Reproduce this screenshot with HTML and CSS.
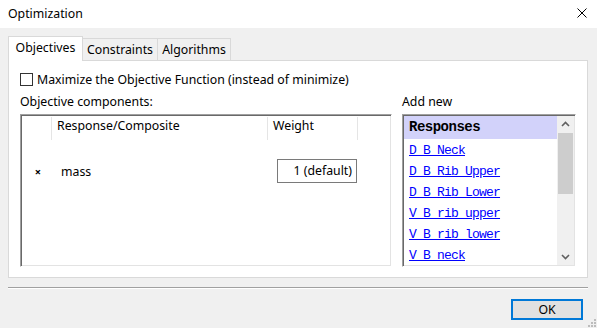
FILE: index.html
```html
<!doctype html>
<html lang="en">
<head>
    <meta charset="UTF-8">
    <title>Optimization</title>
    <link rel="stylesheet" href="styles.css">
</head>
<body>
<div class="window">
    <div class="titlebar">
        <span class="title">Optimization</span>
        <svg class="close" width="10" height="10" viewBox="0 0 10 10">
            <path d="M0.5 0.5L9.5 9.5M9.5 0.5L0.5 9.5" stroke="#000" stroke-width="1" fill="none"/>
        </svg>
    </div>
    <div class="content">
        <div class="tabs">
            <div class="tab on">Objectives</div>
            <div class="tab tab-c">Constraints</div>
            <div class="tab tab-a">Algorithms</div>
        </div>
        <div class="panel">
            <label class="check"><span class="box"></span>Maximize the Objective Function (instead of minimize)</label>
            <div class="cols">
                <div class="left">
                    <div class="caption">Objective components:</div>
                    <div class="sunken grid">
                        <div class="head">
                            <div class="cell c1"></div>
                            <div class="cell c2">Response/Composite</div>
                            <div class="cell c3">Weight</div>
                            <div class="cell c4"></div>
                        </div>
                        <div class="row">
                            <div class="c1 del">&times;</div>
                            <div class="c2 name">mass</div>
                            <div class="c3"><div class="weight">1 (default)</div></div>
                        </div>
                    </div>
                </div>
                <div class="right">
                    <div class="caption">Add new</div>
                    <div class="sunken addbox">
                        <div class="items">
                            <div class="group">Responses</div>
                            <a class="item" href="#">D B Neck</a>
                            <a class="item" href="#">D B Rib Upper</a>
                            <a class="item" href="#">D B Rib Lower</a>
                            <a class="item" href="#">V B rib upper</a>
                            <a class="item" href="#">V B rib lower</a>
                            <a class="item" href="#">V B neck</a>
                        </div>
                        <div class="scroll">
                            <svg class="arrow" width="17" height="17" viewBox="0 0 17 17">
                                <path d="M5 10L8.5 6.5L12 10" stroke="#606060" stroke-width="1.6" fill="none"/>
                            </svg>
                            <div class="track"><div class="thumb"></div></div>
                            <svg class="arrow" width="17" height="17" viewBox="0 0 17 17">
                                <path d="M5 7L8.5 10.5L12 7" stroke="#606060" stroke-width="1.6" fill="none"/>
                            </svg>
                        </div>
                    </div>
                </div>
            </div>
        </div>
        <div class="sep"></div>
        <div class="footer">
            <button class="ok">OK</button>
        </div>
    </div>
    <svg class="grip" width="8" height="8" viewBox="0 0 8 8">
        <rect x="6" y="0" width="2" height="2" fill="#bcbcbc"/>
        <rect x="3" y="3" width="2" height="2" fill="#bcbcbc"/>
        <rect x="6" y="3" width="2" height="2" fill="#bcbcbc"/>
        <rect x="0" y="6" width="2" height="2" fill="#bcbcbc"/>
        <rect x="3" y="6" width="2" height="2" fill="#bcbcbc"/>
        <rect x="6" y="6" width="2" height="2" fill="#bcbcbc"/>
    </svg>
</div>
</body>
</html>
```

FILE: styles.css
```css
* {
    margin: 0;
    padding: 0;
    box-sizing: border-box;
}

body {
    width: 597px;
    height: 328px;
    overflow: hidden;
    font-family: "Noto Sans", "Liberation Sans", sans-serif;
    font-size: 12.3px;
    color: #000;
    background: #f0f0f0;
}

.window {
    position: relative;
    height: 328px;
}

.titlebar {
    height: 28px;
    background: #fff;
    display: flex;
    align-items: center;
    justify-content: space-between;
    padding: 0 10px 2px 8px;
}

.content {
    padding: 8px 9px 0 8px;
}

/* tabs */
.tabs {
    display: flex;
    align-items: flex-end;
    height: 24px;
}

.tab {
    height: 22px;
    line-height: 21px;
    border: 1px solid #d9d9d9;
    border-bottom: none;
    background: #f0f0f0;
    text-align: center;
    margin-left: -1px;
}

.tab.on {
    height: 25px;
    width: 75px;
    margin-left: 0;
    margin-bottom: -1px;
    background: #fff;
    position: relative;
    z-index: 1;
    line-height: 22px;
}

.tab-c {
    width: 76px;
}

.tab-a {
    width: 74px;
}

.panel {
    height: 218px;
    background: #fff;
    border: 1px solid #d9d9d9;
    padding: 10px 10px 0 11px;
}

.check {
    display: flex;
    align-items: center;
    height: 17px;
}

.box {
    width: 13px;
    height: 13px;
    border: 1px solid #333;
    background: #fff;
    margin-right: 4px;
}

.cols {
    display: flex;
    margin-top: 5px;
    gap: 10px;
}

.caption {
    height: 18px;
    line-height: 17px;
    margin-bottom: 3px;
}

.sunken {
    height: 153px;
    background: #fff;
    border: 1px solid;
    border-color: #a0a0a0 #fff #fff #a0a0a0;
    box-shadow: inset 1px 1px #696969, inset -1px -1px #e3e3e3;
    padding: 1px;
}

.left .sunken {
    width: 372px;
}

.right .sunken {
    width: 174px;
}

/* objective grid */
.head, .row {
    display: flex;
}

.head {
    height: 23px;
    margin-top: 1px;
}

.cell {
    border-right: 1px solid #e5e5e5;
    line-height: 17px;
    padding-left: 5px;
}

.c1 {
    width: 30px;
}

.c2 {
    width: 216px;
}

.c3 {
    width: 90px;
}

.c4 {
    width: 32px;
    border-right: none;
}

.row {
    margin-top: 19px;
    height: 24px;
    align-items: center;
}

.del {
    text-align: center;
    font-size: 11px;
    font-weight: bold;
    padding-left: 2px;
}

.name {
    padding-left: 9px;
}

.c3 .weight {
    margin-left: 9px;
    width: 80px;
    height: 24px;
    border: 1px solid #7a7a7a;
    text-align: right;
    line-height: 21px;
    padding-right: 4px;
}

/* add new list */
.addbox {
    display: flex;
}

.items {
    flex: 1;
    display: flex;
    flex-direction: column;
    font-family: "Liberation Mono", "DejaVu Sans Mono", monospace;
    font-size: 13px;
    letter-spacing: -0.8px;
}

.group {
    height: 23px;
    line-height: 23px;
    background: #d2d2fa;
    font-family: "Liberation Mono", "DejaVu Sans Mono", monospace;
    font-size: 14px;
    font-weight: bold;
    letter-spacing: -0.5px;
    padding-left: 5px;
    margin-bottom: 1px;
}

.item {
    height: 21px;
    line-height: 21px;
    padding-left: 5px;
    color: #0000ff;
    text-decoration: underline;
}

.scroll {
    width: 17px;
    background: #f0f0f0;
    display: flex;
    flex-direction: column;
}

.track {
    flex: 1;
    padding: 0 1px;
}

.thumb {
    height: 61px;
    background: #cdcdcd;
}

/* footer */
.sep {
    margin-top: 9px;
    width: 580px;
    height: 2px;
    border-top: 1px solid #a0a0a0;
    border-bottom: 1px solid #fff;
}

.footer {
    display: flex;
    justify-content: flex-end;
    padding-top: 10px;
    padding-right: 5px;
}

.ok {
    width: 72px;
    height: 21px;
    border: 2px solid #0078d7;
    background: #e1e1e1;
    font-family: "Noto Sans", "Liberation Sans", sans-serif;
    font-size: 12.3px;
    color: #000;
    line-height: 15px;
}

.grip {
    position: absolute;
    right: 1px;
    bottom: 1px;
}
```
